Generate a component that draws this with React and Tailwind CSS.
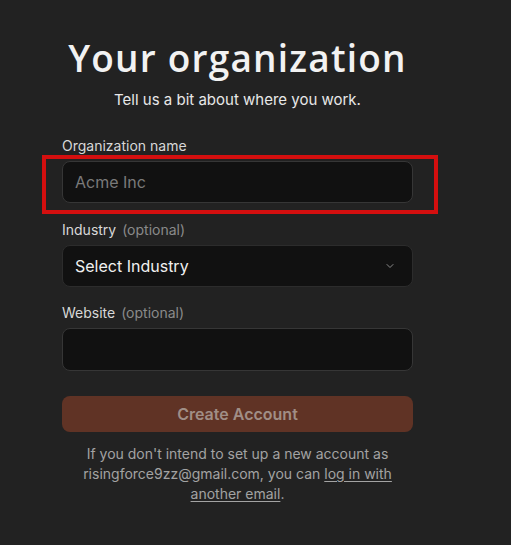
import { ChevronDown } from "lucide-react";

export default function App() {
  return (
    <div className="min-h-screen bg-[#222222] font-['Inter',sans-serif]">
      <div className="ml-[62px] w-[351px] pt-[36px] flex flex-col">
        <h1 className="text-center text-[37px] leading-[44px] font-semibold tracking-[1.2px] text-[#f2f2f2] font-['Open_Sans',sans-serif]">
          Your organization
        </h1>
        <p className="mt-[8px] text-center text-[15px] leading-[24px] text-[#e8e8e8]">
          Tell us a bit about where you work.
        </p>

        <label className="mt-[24px] text-[14px] leading-[20px] text-[#d8d8d8]">Organization name</label>
        <div className="relative mt-[5px]">
          <input
            placeholder="Acme Inc"
            className="w-full h-[42px] rounded-[8px] bg-[#111111] border border-[#363636] px-[12px] text-[16px] text-white placeholder:text-[#7a7a7a] outline-none"
          />
          <div className="absolute left-[-20px] right-[-25px] top-[-6px] bottom-[-11px] border-[4px] border-[#d40f0f] pointer-events-none" />
        </div>

        <label className="mt-[17px] text-[14px] leading-[20px] text-[#d8d8d8]">
          Industry <span className="ml-[2px] text-[#8a8a8a]">(optional)</span>
        </label>
        <div className="mt-[5px] h-[42px] rounded-[8px] bg-[#111111] border border-[#2c2c2c] px-[12px] flex items-center justify-between">
          <span className="text-[16px] text-[#f0f0f0]">Select Industry</span>
          <ChevronDown size={12} strokeWidth={2} className="text-[#8a8a8a] mr-[4px]" />
        </div>

        <label className="mt-[16px] text-[14px] leading-[20px] text-[#d8d8d8]">
          Website <span className="ml-[2px] text-[#8a8a8a]">(optional)</span>
        </label>
        <input className="mt-[5px] h-[43px] rounded-[8px] bg-[#111111] border border-[#363636] px-[12px] text-[16px] text-white outline-none" />

        <button className="mt-[25px] h-[36px] rounded-[8px] bg-[#603325] text-[16px] font-semibold text-[#a08e86]">
          Create Account
        </button>

        <p className="mt-[12px] px-[18px] text-center text-[14px] leading-[20px] text-[#a3a3a3]">
          If you don't intend to set up a new account as risingforce9zz@gmail.com, you can{" "}
          <a className="underline underline-offset-[2px] cursor-pointer">log in with another email</a>.
        </p>
      </div>
    </div>
  );
}
